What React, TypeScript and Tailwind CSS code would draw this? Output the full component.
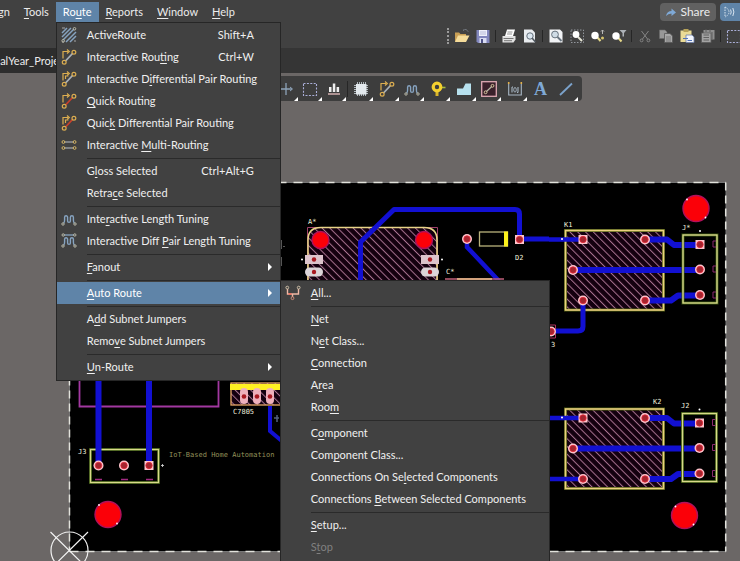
import React from "react";

type IconProps = { children: React.ReactNode; size?: number };

function Icon({ children, size = 16 }: IconProps) {
  return (
    <svg width={size} height={size} viewBox="0 0 16 16" fill="none" aria-hidden="true" className="block shrink-0">
      {children}
    </svg>
  );
}

/* ---------- menu icons ---------- */

const ActiveRouteIcon = () => (
  <Icon>
    <path d="M1 6 6 1M1 10 10 1M2 13 13 2M5 15 15 5M9 15 15 9" stroke="#86a3c0" strokeWidth="1.5" />
    <path d="M1 1h3M1 15h2M13 14h2" stroke="#a9a9a9" strokeWidth="1" />
    <circle cx="13.5" cy="1.8" r="1.3" stroke="#b8b8a8" />
    <circle cx="2.2" cy="13.8" r="1.3" stroke="#b8b8a8" />
  </Icon>
);

function RoutingIcon({ trace, pair = false }: { trace: string; pair?: boolean }) {
  return (
    <Icon>
      <path d="M4.5 12 11.5 4.5" stroke={trace} strokeWidth="1.8" />
      <path d="M2 9.5V2.5H7M6 .5 8.3 2.5 6 4.5" stroke="#dcae50" strokeWidth="1.2" />
      {pair && <path d="M4.5 8V5H7.5" stroke="#dcae50" strokeWidth="1.2" />}
      <circle cx="3.2" cy="13.2" r="1.9" stroke="#dcae50" strokeWidth="1.2" />
      <circle cx="12.9" cy="3.3" r="1.9" stroke="#dcae50" strokeWidth="1.2" />
    </Icon>
  );
}

const MultiRoutingIcon = () => (
  <Icon>
    <path d="M3.5 5H12.5M3.5 11H12.5" stroke="#b9c0c8" strokeWidth="1.2" />
    <circle cx="2.4" cy="5" r="1.4" stroke="#d5b565" />
    <circle cx="13.6" cy="5" r="1.4" stroke="#d5b565" />
    <circle cx="2.4" cy="11" r="1.4" stroke="#d5b565" />
    <circle cx="13.6" cy="11" r="1.4" stroke="#d5b565" />
  </Icon>
);

function TuningIcon({ pair = false }: { pair?: boolean }) {
  return (
    <Icon>
      {pair && (
        <>
          <path d="M3 2H13" stroke="#86a3c0" strokeWidth="1.3" />
          <circle cx="2.2" cy="2" r="1.2" stroke="#b8b8a8" />
          <circle cx="13.8" cy="2" r="1.2" stroke="#b8b8a8" />
        </>
      )}
      <path
        d="M2.6 12.3Q3.6 11.5 3.6 9V6.2a1.5 1.5 0 0 1 3 0V10a1.4 1.4 0 0 0 2.8 0V6.2a1.5 1.5 0 0 1 3 0V9Q12.4 11.5 13.4 12.3"
        stroke="#86a3c0"
        strokeWidth="1.4"
      />
      <circle cx="2" cy="13" r="1.2" stroke="#b8b8a8" />
      <circle cx="14" cy="13" r="1.2" stroke="#b8b8a8" />
    </Icon>
  );
}

const RouteAllIcon = () => (
  <Icon>
    <path d="M2.5 4V9H13.5V4M7.5 9V12" stroke="#f0b8a4" strokeWidth="1.4" />
    <circle cx="2.3" cy="2.6" r="1.4" stroke="#cfc0a8" />
    <circle cx="13.7" cy="2.6" r="1.4" stroke="#cfc0a8" />
    <circle cx="7.5" cy="13.2" r="1.4" stroke="#cf8a76" />
    <path d="M3.5 9H6.5" stroke="#ff5b4a" strokeWidth="1.2" />
  </Icon>
);

/* ---------- standard toolbar icons ---------- */

const FolderIcon = () => (
  <Icon>
    <path d="M1 14V4.5H5L6.5 6H12V8" fill="#c99f55" />
    <path d="M1 14 4 7.5H15.5L12 14Z" fill="#f5dc9a" />
    <path d="M9 2.5Q12 0 14 3.5" stroke="#8d96a0" strokeDasharray="1.5 1" />
  </Icon>
);
const SaveIcon = () => (
  <Icon>
    <path d="M1.5 2H14.5V15H3L1.5 13.5Z" fill="#8287bd" />
    <rect x="4" y="2" width="8" height="6" fill="#eef0fb" />
    <path d="M5 4H11M5 6H11" stroke="#a9aed0" strokeWidth=".8" />
    <rect x="4.5" y="10" width="7" height="5" fill="#d9dcf2" />
    <rect x="6" y="11" width="2" height="4" fill="#4c5187" />
  </Icon>
);
const PrintIcon = () => (
  <Icon>
    <path d="M6 1.5H14L12 8H4Z" fill="#fff" />
    <path d="M6.5 4H11.5M6 6H11" stroke="#777" strokeWidth=".8" />
    <path d="M1.5 8H14.5V11.5L12.5 14.5H1.5Z" fill="#e2e2e2" />
    <path d="M2.5 10.5H12.5M3 12.7H11" stroke="#777" />
  </Icon>
);
const PreviewIcon = () => (
  <Icon>
    <path d="M2 1.5H10L13 4.5V14.5H2Z" fill="#e9ecef" />
    <circle cx="8" cy="8" r="3.2" fill="#dbe6ef" stroke="#64707c" />
    <path d="M10 10 13.5 14" stroke="#505860" strokeWidth="1.6" />
  </Icon>
);
const FitIcon = () => (
  <Icon>
    <path d="M1.5 1.5H12L14.5 4V14.5H1.5Z" fill="#f1f3f5" />
    <circle cx="7" cy="6.5" r="3.4" fill="#cfdce6" stroke="#68747f" />
    <path d="M9.5 9 13.5 13" stroke="#68747f" strokeWidth="1.8" />
  </Icon>
);
const ZoomAreaIcon = () => (
  <Icon>
    <rect x="2" y="2" width="12.5" height="12.5" stroke="#92979d" strokeDasharray="1.5 1.5" />
    <path d="M9 9 13 13" stroke="#e8e8d8" strokeWidth="2" />
    <circle cx="7" cy="6.5" r="3.4" fill="#fff" />
  </Icon>
);
const ZoomPointIcon = () => (
  <Icon>
    <path d="M7 9 10.5 13" stroke="#e6d98a" strokeWidth="2" />
    <circle cx="5" cy="7.5" r="3.7" fill="#fff" />
    <path d="M12.5 6V2M11 3.5 12.5 2 14 3.5" stroke="#b8b8b8" />
    <circle cx="12.5" cy="10" r="1.5" fill="#d6c36b" />
  </Icon>
);
const ZoomFilterIcon = () => (
  <Icon>
    <path d="M7 9.5 10.5 13.5" stroke="#e6d98a" strokeWidth="2" />
    <circle cx="5" cy="8" r="3.7" fill="#fff" />
    <path d="M8.5 2H15.5L13 5V8.5H11.5V5Z" fill="#adb2b8" />
  </Icon>
);
const CutIcon = () => (
  <Icon>
    <path d="M4.5 3 10.5 11M11.5 3 5.5 11" stroke="#858585" />
    <circle cx="4.6" cy="12.4" r="1.4" stroke="#858585" />
    <circle cx="11.4" cy="12.4" r="1.4" stroke="#858585" />
  </Icon>
);
const CopyIcon = () => (
  <Icon>
    <path d="M1.5 2H7L9 4V10.5H1.5Z" fill="#989898" stroke="#6b6b6b" strokeWidth=".6" />
    <path d="M6.5 5.5H12L14.5 8V14.5H6.5Z" fill="#a8a8a8" stroke="#555" strokeWidth=".8" />
    <path d="M8 9H13M8 11H13M8 13H13" stroke="#666" strokeWidth=".7" />
  </Icon>
);
const PasteIcon = () => (
  <Icon>
    <rect x="1.5" y="2.5" width="11" height="11.5" fill="#eadb96" />
    <rect x="4.5" y="1" width="5" height="3" fill="#b7a35a" />
    <path d="M7 7H13L15 9V14.5H7Z" fill="#f2f5fb" stroke="#6d7fa8" strokeWidth=".8" />
    <path d="M4 10.5H9M8.5 12.5H13" stroke="#5273b8" />
  </Icon>
);
const PasteSpecialIcon = () => (
  <Icon>
    <rect x="3.5" y="2" width="11" height="9.5" fill="#8f8f8f" />
    <rect x="1.5" y="5" width="9.5" height="9.5" fill="#a3a3a3" stroke="#5a5a5a" strokeWidth=".8" />
    <path d="M3.5 7H9M3.5 9.5H9M3.5 12H9M6 1V4M10 1V4M12 4V11" stroke="#5a5a5a" strokeWidth=".9" />
  </Icon>
);
const MarqueeIcon = () => (
  <Icon>
    <rect x="1.5" y="2.5" width="13" height="12" stroke="#aaaed8" strokeWidth="1.1" strokeDasharray="2 1.4" />
  </Icon>
);

/* ---------- active bar icons ---------- */

const MoveIcon = () => (
  <Icon>
    <path d="M8 2V14M2 8H14" stroke="#8da2b8" strokeWidth="1.3" />
    <path d="M12 6 14.5 8 12 10" stroke="#8da2b8" />
  </Icon>
);
const AlignIcon = () => (
  <Icon>
    <path d="M2 13H14" stroke="#d4b1b1" strokeWidth="1.5" />
    <rect x="3" y="6" width="2.5" height="5" fill="#eee" />
    <rect x="6.8" y="2.5" width="2.5" height="8.5" fill="#eee" />
    <rect x="10.6" y="6" width="2.5" height="5" fill="#eee" />
  </Icon>
);
const ChipIcon = () => (
  <Icon>
    <path
      d="M4.5 1V15M6.5 1V15M8.5 1V15M10.5 1V15M12.5 1V15M1 4.5H15M1 6.5H15M1 8.5H15M1 10.5H15M1 12.5H15"
      stroke="#bcc5cb"
      strokeWidth=".9"
    />
    <rect x="3" y="3" width="10.5" height="10.5" fill="#e3e9ed" />
  </Icon>
);
const ViaIcon = () => (
  <Icon>
    <path d="M11 6.5H15.5" stroke="#a6b93b" strokeWidth="1.6" />
    <path d="M7 10V15" stroke="#d9b52c" strokeWidth="3" />
    <circle cx="7" cy="6" r="3.8" stroke="#f4d02f" strokeWidth="3.2" />
  </Icon>
);
const PolygonIcon = () => (
  <Icon>
    <path d="M1 14V7.5H7L9.5 2.5H15V14Z" fill="#b7e1ee" />
  </Icon>
);
const RoomIcon = () => (
  <Icon>
    <rect x=".7" y=".7" width="14.6" height="14.6" fill="#39202a" stroke="#dfa9b4" strokeWidth="1.3" />
    <path d="M5.5 10.5 10.5 5.8" stroke="#b9b9a9" strokeWidth="1.2" />
    <circle cx="4.6" cy="11.3" r="1.4" stroke="#d9c8a0" />
    <circle cx="11.5" cy="4.8" r="1.4" stroke="#d9c8a0" />
  </Icon>
);
const DimensionIcon = () => (
  <Icon>
    <path d="M1.7 3V14H14.3V3M5 6V11.5M11 6V11.5M5 6H6M10 11.5H11" stroke="#a7b6c4" strokeWidth="1.1" />
    <ellipse cx="8" cy="8.8" rx="1.3" ry="2.3" stroke="#a7b6c4" strokeWidth=".9" />
    <path d="M1.7 1V3M14.3 1V3" stroke="#e3b04b" strokeWidth="1.6" />
  </Icon>
);
const LineIcon = () => (
  <Icon>
    <path d="M2 14 14 2.5" stroke="#7ba2cb" strokeWidth="1.8" />
  </Icon>
);

/* ---------- menus ---------- */

/* An ampersand in a label marks the access key that follows it. */
function Label({ text }: { text: string }) {
  const at = text.indexOf("&");
  if (at < 0) return <span>{text}</span>;
  return (
    <span>
      {text.slice(0, at)}
      <span className="underline underline-offset-2">{text[at + 1]}</span>
      {text.slice(at + 2)}
    </span>
  );
}

type Entry = {
  label: string;
  keys?: string;
  icon?: React.ReactNode;
  disabled?: boolean;
  arrow?: boolean;
  sub?: Entry[][];
};

const autoRoute: Entry[][] = [
  [{ label: "&All...", icon: <RouteAllIcon /> }],
  [
    { label: "&Net" },
    { label: "N&et Class..." },
    { label: "&Connection" },
    { label: "A&rea" },
    { label: "Roo&m" },
  ],
  [
    { label: "C&omponent" },
    { label: "Com&ponent Class..." },
    { label: "Connections On Se&lected Components" },
    { label: "Connections &Between Selected Components" },
  ],
  [{ label: "&Setup..." }, { label: "S&top", disabled: true }],
];

const routeMenu: Entry[][] = [
  [
    { label: "ActiveRoute", keys: "Shift+A", icon: <ActiveRouteIcon /> },
    { label: "Interactive Rou&ting", keys: "Ctrl+W", icon: <RoutingIcon trace="#a9b0b8" /> },
    { label: "Interactive D&ifferential Pair Routing", icon: <RoutingIcon trace="#a9b0b8" pair /> },
    { label: "&Quick Routing", icon: <RoutingIcon trace="#c8402c" /> },
    { label: "Quic&k Differential Pair Routing", icon: <RoutingIcon trace="#c8402c" pair /> },
    { label: "Interactive &Multi-Routing", icon: <MultiRoutingIcon /> },
  ],
  [{ label: "G&loss Selected", keys: "Ctrl+Alt+G" }, { label: "Retra&ce Selected" }],
  [
    { label: "Inte&ractive Length Tuning", icon: <TuningIcon /> },
    { label: "Interactive Diff &Pair Length Tuning", icon: <TuningIcon pair /> },
  ],
  [{ label: "&Fanout", arrow: true }],
  [{ label: "&Auto Route", arrow: true, sub: autoRoute }],
  [{ label: "A&dd Subnet Jumpers" }, { label: "Remo&ve Subnet Jumpers" }],
  [{ label: "&Un-Route", arrow: true }],
];

function Menu({ groups, className }: { groups: Entry[][]; className: string }) {
  return (
    <ul role="menu" className={`absolute z-20 border border-[#262626] bg-[#414141] pt-px text-[#f0f0f0] ${className}`}>
      {groups.map((group, g) => (
        <React.Fragment key={g}>
          {g > 0 && (
            <li role="separator" className="flex h-1 items-center pl-[30px]">
              <span className="h-px w-full bg-[#2a2a2a]" />
            </li>
          )}
          {group.map((e) => (
            <li key={e.label} className="relative">
              <button
                role="menuitem"
                disabled={e.disabled}
                className={`flex h-[22px] w-full items-center whitespace-nowrap text-left ${
                  e.sub ? "bg-[#5f84a8] text-white" : ""
                } ${e.disabled ? "text-[#808080]" : ""}`}
              >
                <span className="flex w-[30px] shrink-0 pl-1">{e.icon}</span>
                <Label text={e.label} />
                {e.keys && <span className="ml-auto pr-[26px]">{e.keys}</span>}
                {e.arrow && (
                  <svg width="4" height="8" viewBox="0 0 4 8" className="ml-auto mr-2" aria-hidden="true">
                    <path d="M0 0 4 4 0 8Z" fill="#fff" />
                  </svg>
                )}
              </button>
              {e.sub && <Menu groups={e.sub} className="-top-0.5 left-full w-[270px] pb-2" />}
            </li>
          ))}
        </React.Fragment>
      ))}
    </ul>
  );
}

/* ---------- board drawing ---------- */

const BLUE = "#1210d2";

function Pad({ x, y, square = false }: { x: number; y: number; square?: boolean }) {
  return (
    <g>
      {square ? (
        <rect x={x - 4.5} y={y - 4.5} width="9" height="9" fill="#ffc4cc" />
      ) : (
        <circle cx={x} cy={y} r="5" fill="#ffc4cc" />
      )}
      <circle cx={x} cy={y} r="3.2" fill="#a3242e" stroke="#e32636" strokeWidth=".8" />
    </g>
  );
}

function Hole({ x, y, r = 13 }: { x: number; y: number; r?: number }) {
  return <circle cx={x} cy={y} r={r} fill="#fb0008" stroke="#b0105c" strokeWidth="1.4" />;
}

function Outline({ x, y, w, h }: { x: number; y: number; w: number; h: number }) {
  return (
    <>
      <rect x={x} y={y} width={w} height={h} stroke="#34500e" strokeWidth="3" />
      <rect x={x} y={y} width={w} height={h} stroke="#d9d98a" strokeWidth="1.4" />
    </>
  );
}

function Relay({ y, children }: { y: number; children?: React.ReactNode }) {
  return (
    <g transform={`translate(0 ${y})`}>
      <rect x="565.5" y="0" width="98" height="79.5" fill="#14000f" />
      <rect x="565.5" y="0" width="98" height="79.5" fill="url(#hatch)" />
      <rect x="565.5" y="0" width="98" height="79.5" stroke="#4a5a10" strokeWidth="3" />
      <rect x="565.5" y="0" width="98" height="79.5" stroke="#ecd080" strokeWidth="1.6" />
      <g stroke={BLUE} strokeWidth="6" strokeLinejoin="round">
        <path d="M549 9H583" strokeWidth="4.5" />
        <path d="M645 9H667L674 14.5H700" />
        <path d="M573 39.5H700" />
        <path d="M645 70H671L678 65H700" />
        {children}
      </g>
      <Pad x={583} y={9} square />
      <Pad x={645} y={9} />
      <Pad x={573} y={39.5} />
      <Pad x={583} y={70} />
      <Pad x={645} y={70} />
      <circle cx="562" cy="8.5" r="1" fill="#fff" />
    </g>
  );
}

function Terminal({ x, y }: { x: number; y: number }) {
  return (
    <g>
      <Outline x={x} y={y} w={34} h={68} />
      <Pad x={x + 17} y={y + 9.5} square />
      <Pad x={x + 17} y={y + 34.5} />
      <Pad x={x + 17} y={y + 60} />
      {[6, 31, 57].map((d) => (
        <path key={d} d={`M${x + 33} ${y + d}h-3v6h3`} stroke="#8c2a70" />
      ))}
      <circle cx={x + 17} cy={y - 4} r="1" fill="#fff" />
    </g>
  );
}

function Board() {
  return (
    <svg width="740" height="488" viewBox="0 73 740 488" fill="none" className="block" role="img" aria-label="Board layout">
      <defs>
        <pattern id="hatch" width="5.5" height="5.5" patternUnits="userSpaceOnUse" patternTransform="rotate(-45)">
          <rect width="1" height="5.5" fill="#a87290" />
        </pattern>
      </defs>
      <rect x="69" y="182" width="657" height="370" fill="#000" />
      <rect x="69.5" y="182.5" width="656.5" height="369" stroke="#777" strokeWidth="1" />
      <path d="M69.5 182.5H726M69.5 551.5H726" stroke="#e2e2dc" strokeWidth="1.5" strokeDasharray="9 7" />
      <path d="M69.5 182.5V551.5M725.7 182.5V551.5" stroke="#e2e2dc" strokeWidth="1.5" strokeDasharray="8 5" />

      {/* mains input and its terminal */}
      <path d="M79.5 380V406.5H218.5V380" stroke="#a238a0" strokeWidth="1.8" />
      <Outline x={90.5} y={449.5} w={68} h={33} />
      <path d="M98.5 378V465M149 378V465" stroke={BLUE} strokeWidth="6" />
      <Pad x={98.5} y={465.5} />
      <Pad x={124} y={465.5} />
      <Pad x={149} y={465.5} square />
      <path d="M95 479.5h7M121 479.5h7M146 479.5h7" stroke="#a02a80" strokeWidth="1.3" />
      <path d="M161 465.5h3M162.5 464v3" stroke="#ddd" strokeWidth=".8" />
      <Hole x={108} y={514.5} />

      {/* regulator */}
      <rect x="231" y="383" width="52" height="22" fill="#14000f" />
      <rect x="231" y="383" width="52" height="22" fill="url(#hatch)" />
      <rect x="231" y="383" width="52" height="22" stroke="#e8a868" strokeWidth="1.3" />
      <rect x="230" y="384" width="52" height="6" fill="#fff022" />
      {[244, 257, 270].map((x) => (
        <g key={x}>
          <rect x={x - 4} y="388" width="8" height="16" rx="4" fill="#eeb0bc" />
          <circle cx={x} cy="396.5" r="2.3" fill="#a81820" />
        </g>
      ))}
      <path d="M270 406V431L283 442" stroke={BLUE} strokeWidth="4" />
      <path d="M274 418h5M277 415v7" stroke="#53607c" strokeWidth="1.5" />

      {/* controller module */}
      <path d="M308 285V240Q308 227.5 321 227.5H424Q437 227.5 437 240V285Z" fill="#14000f" />
      <path d="M308 285V240Q308 227.5 321 227.5H424Q437 227.5 437 240V285Z" fill="url(#hatch)" />
      <path d="M307.5 285V227.5H437.5V285" stroke="#a0406a" />
      <path d="M308 285V240Q308 227.5 321 227.5H424Q437 227.5 437 240V285" stroke="#e8d488" strokeWidth="1.6" />
      <path
        d="M360.5 285V242L394 209.5H515Q519.5 209.5 519.5 214V239H549"
        stroke={BLUE}
        strokeWidth="5"
        strokeLinejoin="round"
      />
      <Hole x={320.5} y={240} r={8.5} />
      <Hole x={424} y={240} r={8.5} />
      {[305, 421].map((x) => (
        <g key={x}>
          <rect x={x} y="255" width="18" height="9" fill="#dcc4cc" />
          <rect x={x} y="267.5" width="18" height="9" rx="4.5" fill="#dcd4d8" />
          <circle cx={x + 9} cy="259.5" r="2.2" fill="#a81820" />
          <circle cx={x + 9} cy="272" r="2.2" fill="#a81820" />
        </g>
      ))}
      <circle cx="302" cy="259.5" r="1" fill="#fff" />
      <circle cx="442" cy="259.5" r="1" fill="#fff" />
      <path d="M281.5 240v9M281.5 257v9M283 246.5h2" stroke="#555" />

      {/* diode */}
      <path d="M467 243V247L499 281" stroke={BLUE} strokeWidth="4.5" />
      <Pad x={467} y={239} />
      <rect x="479.5" y="232" width="28" height="14" stroke="#b9b27c" strokeWidth="1.3" />
      <rect x="504" y="231.5" width="4" height="15" fill="#fbf01c" />
      <Pad x={519.5} y={239.5} square />
      <path d="M445 279H504" stroke="#c0607a" strokeWidth="1.5" />
      <path d="M457 279H492" stroke="#e8c088" strokeWidth="1.5" />

      <Relay y={230.5}>
        <path d="M583 70V96Q583 100.5 578 100.5H553" strokeWidth="5" />
      </Relay>
      <Relay y={409}>
        <path d="M549 70H583" strokeWidth="4.5" />
      </Relay>
      <Terminal x={683} y={235} />
      <Terminal x={682.5} y={413.5} />
      <Pad x={551} y={331.5} />
      <path d="M549 325H555.5V329M555.5 334V338H549" stroke="#b0305c" />
      <Hole x={696} y={208.5} />
      <Hole x={684.5} y={515.5} />
      <g fill="#fff">
        <circle cx="687" cy="199.5" r=".9" />
        <circle cx="705.5" cy="217.5" r=".9" />
        <circle cx="675.5" cy="506.5" r=".9" />
        <circle cx="693.5" cy="524.5" r=".9" />
        <circle cx="99" cy="505" r=".9" />
        <circle cx="117" cy="523.5" r=".9" />
      </g>

      {/* silkscreen texts */}
      <g fill="#eeeedc" className="font-['DejaVu_Sans_Mono',monospace] text-[7px]">
        <text x="78" y="454">J3</text>
        <text x="233" y="414">C7805</text>
        <text x="308" y="224">A*</text>
        <text x="515" y="260">D2</text>
        <text x="446" y="274">C*</text>
        <text x="564" y="227">K1</text>
        <text x="653" y="404">K2</text>
        <text x="682" y="230">J*</text>
        <text x="681" y="408">J2</text>
        <text x="551" y="347">3</text>
        <text x="169" y="457" fill="#94925a">IoT-Based Home Automation</text>
      </g>

      {/* origin marker */}
      <g stroke="#f2f2f2" strokeWidth="1.2">
        <circle cx="69.5" cy="550.5" r="18.5" />
        <path d="M50.5 532 88 569M88 532 50.5 569" />
      </g>
    </svg>
  );
}

/* ---------- page ---------- */

type Tool = { name: string; icon: React.ReactNode; plain?: boolean };

const standardTools: Tool[][] = [
  [
    { name: "Open", icon: <FolderIcon /> },
    { name: "Save", icon: <SaveIcon /> },
  ],
  [
    { name: "Print", icon: <PrintIcon /> },
    { name: "Print preview", icon: <PreviewIcon /> },
  ],
  [
    { name: "Fit document", icon: <FitIcon /> },
    { name: "Zoom area", icon: <ZoomAreaIcon /> },
    { name: "Zoom selected", icon: <ZoomPointIcon /> },
    { name: "Zoom filtered", icon: <ZoomFilterIcon /> },
  ],
  [
    { name: "Cut", icon: <CutIcon /> },
    { name: "Copy", icon: <CopyIcon /> },
    { name: "Paste", icon: <PasteIcon /> },
    { name: "Paste special", icon: <PasteSpecialIcon /> },
  ],
  [{ name: "Select area", icon: <MarqueeIcon /> }],
];

const selectTools: Tool[] = [
  { name: "Move", icon: <MoveIcon /> },
  { name: "Select", icon: <MarqueeIcon /> },
  { name: "Align", icon: <AlignIcon /> },
];

const placeTools: Tool[] = [
  { name: "Component", icon: <ChipIcon /> },
  { name: "Route", icon: <RoutingIcon trace="#a9b0b8" /> },
  { name: "Tune", icon: <TuningIcon /> },
  { name: "Via", icon: <ViaIcon /> },
  { name: "Polygon", icon: <PolygonIcon /> },
  { name: "Room", icon: <RoomIcon /> },
  { name: "Dimension", icon: <DimensionIcon /> },
  {
    name: "Text",
    plain: true,
    icon: <span className="font-['Liberation_Serif',serif] text-lg font-bold leading-4 text-[#7fa9d6]">A</span>,
  },
  { name: "Line", icon: <LineIcon /> },
];

function BarButton({ tool }: { tool: Tool }) {
  return (
    <button aria-label={tool.name} className="relative flex h-6 w-6 items-center justify-center">
      {tool.icon}
      {!tool.plain && (
        <svg width="4" height="4" viewBox="0 0 4 4" className="absolute bottom-0 right-0" aria-hidden="true">
          <path d="M4 0V4H0Z" fill="#fff" />
        </svg>
      )}
    </button>
  );
}

function MenuTitle({ text, open = false, children }: { text: string; open?: boolean; children?: React.ReactNode }) {
  return (
    <li className="relative">
      <button className={`flex h-5 items-center px-[7px] ${open ? "bg-[#5f84a8] text-white" : ""}`}>
        <Label text={text} />
      </button>
      {children}
    </li>
  );
}

export default function App() {
  return (
    <div className="relative flex min-h-screen flex-col overflow-hidden bg-[#6b6766] font-['Lato','Noto_Sans',sans-serif] text-[11px] leading-4 text-[#ececec]">
      <header className="bg-[#414141]">
        <div className="flex h-6 items-center justify-between">
          <nav aria-label="Main menu">
            <ul className="-ml-[9px] flex">
              <MenuTitle text="gn" />
              <MenuTitle text="&Tools" />
              <MenuTitle text="Ro&ute" open>
                <Menu groups={routeMenu} className="left-0 top-full w-[225px] pb-0.5" />
              </MenuTitle>
              <MenuTitle text="&Reports" />
              <MenuTitle text="&Window" />
              <MenuTitle text="&Help" />
            </ul>
          </nav>
          <div className="flex gap-1">
            <button className="flex h-[18px] items-center gap-1 rounded-sm bg-[#616161] px-1.5 text-xs">
              <svg width="10" height="9" viewBox="0 0 10 9" aria-hidden="true">
                <path d="M0 8Q1 3 5.5 3V.5L10 4.5 5.5 8V5.5Q2 5.5 0 8Z" fill="#7fa9d6" />
              </svg>
              Share
            </button>
            <button aria-label="Notifications" className="flex h-[18px] w-5 items-center rounded-l-sm bg-[#5f84a8] pl-1">
              <svg width="12" height="12" viewBox="0 0 12 12" fill="none" stroke="#d7e3ef" aria-hidden="true">
                <path d="M1 1V11M1 1Q5 3 5 6T1 11" strokeDasharray="1.5 1" />
                <path d="M6.5 3.5Q8 6 6.5 8.5M8.8 2Q11 6 8.8 10" />
              </svg>
            </button>
          </div>
        </div>
        <div className="-mr-1 flex h-6 items-center justify-end">
          <span className="h-4 w-1 border-l-2 border-dotted border-[#9a9a9a]" />
          {standardTools.map((group, g) => (
            <React.Fragment key={g}>
              {g > 0 && (
                <span className="flex w-[5px] justify-center">
                  <span className="h-3 w-px bg-[#262626]" />
                </span>
              )}
              {group.map((t) => (
                <button key={t.name} aria-label={t.name} className="flex h-5 w-[21px] items-center justify-center">
                  {t.icon}
                </button>
              ))}
            </React.Fragment>
          ))}
        </div>
      </header>

      <div className="flex h-[25px] items-center bg-[#353535]">
        <button className="-ml-1.5 flex h-full w-40 items-center whitespace-nowrap bg-[#2d2d2d] text-left">
          nalYear_Proje
        </button>
      </div>

      <main className="relative flex-1 overflow-hidden">
        <Board />
        <div
          role="toolbar"
          aria-label="Active bar"
          className="absolute inset-x-0 top-[3px] mx-auto flex h-[25px] w-[424px] items-center justify-end rounded bg-[#3d3d3d] pr-1"
        >
          {selectTools.map((t) => (
            <BarButton key={t.name} tool={t} />
          ))}
          <span className="mx-px h-4 w-px bg-[#262626]" />
          <div className="flex w-[229px] justify-between">
            {placeTools.map((t) => (
              <BarButton key={t.name} tool={t} />
            ))}
          </div>
        </div>
      </main>
    </div>
  );
}
